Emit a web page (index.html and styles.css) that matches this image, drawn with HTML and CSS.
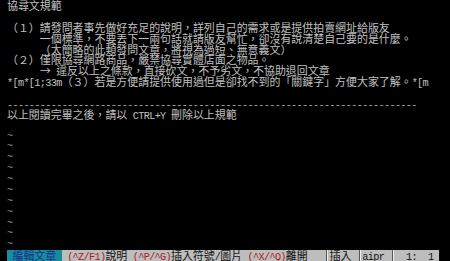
FILE: index.html
```html
<!DOCTYPE html>
<html lang="zh-Hant">
<head>
<meta charset="utf-8">
<title>協尋文規範</title>
<link rel="stylesheet" href="styles.css">
</head>
<body>
<div class="term">
<div class="row">協尋文規範</div>
<div class="row"></div>
<div class="row">（１）請發問者事先做好充足的說明，詳列自己的需求或是提供拍賣網址給版友</div>
<div class="row"><span class="n">      </span>一個標準，不要丟下一兩句話就請版友幫忙，卻沒有說清楚自己要的是什麼。</div>
<div class="row"><span class="n">      </span>（太簡略的此類發問文章，將視為過短、無意義文）</div>
<div class="row">（２）僅限協尋網路商品，嚴禁協尋實體店面之物品。</div>
<div class="row"><span class="n">      </span>→<span class="n"> </span>違反以上之條款，直接砍文，不予劣文，不協助退回文章</div>
<div class="row"><span class="n">*[m*[1;33m</span>（３）若是方便請提供使用過但是卻找不到的「關鍵字」方便大家了解。<span class="n">*[m</span></div>
<div class="row"></div>
<div class="row dash"><span class="n">---------------------------------------------------------------------------</span></div>
<div class="row">以上閱讀完畢之後，請以<span class="n"> CTRL+Y </span>刪除以上規範</div>
<div class="row"></div>
<div class="row tilde"><span class="n">~</span></div>
<div class="row tilde"><span class="n">~</span></div>
<div class="row tilde"><span class="n">~</span></div>
<div class="row tilde"><span class="n">~</span></div>
<div class="row tilde"><span class="n">~</span></div>
<div class="row tilde"><span class="n">~</span></div>
<div class="row tilde"><span class="n">~</span></div>
<div class="row tilde"><span class="n">~</span></div>
<div class="row tilde"><span class="n">~</span></div>
<div class="row tilde"><span class="n">~</span></div>
<div class="row tilde"><span class="n">~</span></div>
<div class="row status">
<div class="mode"><span class="n"> </span>編輯文章<span class="n"> </span></div>
<div class="bar"><span class="n"> </span><span class="n key">(^Z/F1)</span>說明<span class="n"> </span><span class="n key">(^P/^G)</span>插入符號<span class="n">/</span>圖片<span class="n"> </span><span class="n key">(^X/^Q)</span>離開<span class="n">   </span><span class="sep"></span>插入<span class="n"> </span><span class="sep"></span><span class="n">aipr </span><span class="sep"></span><span class="n">  1:  1 </span></div>
</div>
</div>
</body>
</html>
```

FILE: styles.css
```css
html, body {
  margin: 0;
  background: #000;
}

body {
  width: 450px;
  height: 261px;
  overflow: hidden;
}

.term {
  padding-left: 7px;
  display: grid;
  grid-template-rows: repeat(24, 10.875px);
  font-family: "Noto Sans CJK TC", "Noto Sans CJK SC", sans-serif;
  font-size: 10.94px;
  line-height: 10.875px;
  color: #c0c0c0;
  white-space: pre;
}

.row {
  height: 10.875px;
}

.n {
  font-family: "Liberation Mono", monospace;
  font-size: 10.2px;
  letter-spacing: -0.65px;
}

.dash {
  color: #a8a8a8;
}

.tilde {
  color: #9a9a9a;
}

.tilde .n {
  vertical-align: 2px;
}

.status {
  display: flex;
}

.mode {
  width: 54.7px;
  background: #168ca0;
  color: #1c2c8c;
}

.bar {
  width: 377.4px;
  background: #bdbdbd;
  color: #111;
}

.key {
  color: #a82020;
}

.sep {
  display: inline-block;
  width: 5.47px;
  height: 10.875px;
  vertical-align: top;
  background: linear-gradient(to right, transparent 2px, #555 2px, #555 3px, #eee 3px, #eee 4px, transparent 4px);
}
```
